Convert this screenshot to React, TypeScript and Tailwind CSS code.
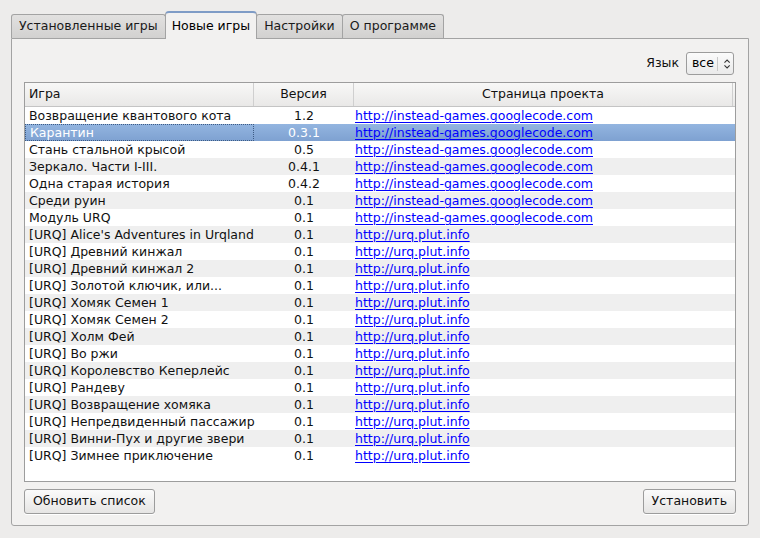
import React from "react";

const G = "http://instead-games.googlecode.com";
const U = "http://urq.plut.info";

const GAMES: [string, string, string][] = [
  ["Возвращение квантового кота", "1.2", G],
  ["Карантин", "0.3.1", G],
  ["Стань стальной крысой", "0.5", G],
  ["Зеркало. Части I-III.", "0.4.1", G],
  ["Одна старая история", "0.4.2", G],
  ["Среди руин", "0.1", G],
  ["Модуль URQ", "0.1", G],
  ["[URQ] Alice's Adventures in Urqland", "0.1", U],
  ["[URQ] Древний кинжал", "0.1", U],
  ["[URQ] Древний кинжал 2", "0.1", U],
  ["[URQ] Золотой ключик, или...", "0.1", U],
  ["[URQ] Хомяк Семен 1", "0.1", U],
  ["[URQ] Хомяк Семен 2", "0.1", U],
  ["[URQ] Холм Фей", "0.1", U],
  ["[URQ] Во ржи", "0.1", U],
  ["[URQ] Королевство Кеперлейс", "0.1", U],
  ["[URQ] Рандеву", "0.1", U],
  ["[URQ] Возвращение хомяка", "0.1", U],
  ["[URQ] Непредвиденный пассажир", "0.1", U],
  ["[URQ] Винни-Пух и другие звери", "0.1", U],
  ["[URQ] Зимнее приключение", "0.1", U],
];

const SELECTED = 1;

function Tab({ label, active }: { label: string; active?: boolean }) {
  if (active) {
    return (
      <div className="relative z-10 -mb-px -ml-px h-[28px] px-[6px] flex items-center rounded-t-[4px] border border-b-0 border-[#a3a3a3] border-t-[#7f9cc6] border-t-2 bg-[#f2f1f0] text-[#000]">
        {label}
      </div>
    );
  }
  return (
    <div className="h-[24px] px-[7px] flex items-center rounded-t-[3px] border border-b-0 border-[#a3a3a3] bg-gradient-to-b from-[#e2e1e0] to-[#d2d1d0] text-[#1a1a1a] -ml-px first:ml-0">
      {label}
    </div>
  );
}

function Button({ children }: { children: React.ReactNode }) {
  return (
    <button className="h-[25px] px-[8px] rounded-[3px] border border-[#9c9c9c] bg-gradient-to-b from-[#fbfbfb] to-[#e6e5e4] text-[#111] shadow-[0_1px_0_#fff]">
      {children}
    </button>
  );
}

export default function App() {
  return (
    <div
      className="w-[760px] h-[538px] bg-[#edeceb] pt-[10px] pl-[11px] pr-[11px] text-[12.5px] leading-none"
      style={{ fontFamily: '"DejaVu Sans", sans-serif' }}
    >
      {/* Вкладки */}
      <div className="flex items-end h-[28px]">
        <Tab label="Установленные игры" />
        <Tab label="Новые игры" active />
        <Tab label="Настройки" />
        <Tab label="О программе" />
      </div>

      {/* Панель */}
      <div className="h-[488px] border border-[#a3a3a3] bg-[#f2f1f0] rounded-b-[3px] px-[12px] flex flex-col">
        <div className="flex items-center justify-end gap-[7px] pt-[13px] pr-[2px]">
          <span className="text-[#111]">Язык</span>
          <div className="h-[23px] w-[48px] rounded-[3px] border border-[#9c9c9c] bg-gradient-to-b from-[#fbfbfb] to-[#eaeaea] flex items-center">
            <span className="pl-[5px] pr-[3px] text-[#000]">все</span>
            <span className="w-px h-[14px] bg-[#c8c8c8]" />
            <svg width="14" height="14" viewBox="0 0 14 14" className="ml-[3px]">
              <path d="M4 5.5 L7 2.5 L10 5.5" fill="none" stroke="#333" strokeWidth="1.2" />
              <path d="M4 8.5 L7 11.5 L10 8.5" fill="none" stroke="#333" strokeWidth="1.2" />
            </svg>
          </div>
        </div>

        {/* Таблица */}
        <div className="mt-[7px] h-[400px] border border-[#9d9d9d] bg-white flex flex-col">
          <div className="h-[24px] shrink-0 flex items-center bg-gradient-to-b from-[#f8f8f7] to-[#e9e8e7] border-b border-[#c4c4c4] text-[#111]">
            <div className="w-[229px] pl-[4px] h-full flex items-center border-r border-[#cfcfcf]">Игра</div>
            <div className="w-[100px] h-full flex items-center justify-center border-r border-[#cfcfcf]">Версия</div>
            <div className="flex-1 h-full flex items-center justify-center border-r border-[#cfcfcf] mr-[2px]">
              Страница проекта
            </div>
          </div>
          {GAMES.map(([name, ver, url], i) => {
            const sel = i === SELECTED;
            const bg = sel
              ? "bg-gradient-to-b from-[#93b5e0] to-[#7ea1d1] text-white"
              : i % 2 === 1
              ? "bg-[#efefef] text-[#111]"
              : "bg-white text-[#111]";
            return (
              <div key={name} className={`h-[17px] shrink-0 flex leading-[17px] ${bg}`}>
                <div
                  className={`w-[229px] h-full pl-[4px] whitespace-nowrap ${
                    sel ? "border border-dotted border-[#3d5b84] leading-[15px] pl-[3px]" : ""
                  }`}
                >
                  {name}
                </div>
                <div className="w-[100px] text-center">{ver}</div>
                <div className="flex-1 pl-[1px]">
                  <a href="#" className="text-[#0000ff] underline underline-offset-[2px]">
                    {url}
                  </a>
                </div>
              </div>
            );
          })}
        </div>

        <div className="mt-[7px] flex justify-between">
          <Button>Обновить список</Button>
          <Button>Установить</Button>
        </div>
      </div>
    </div>
  );
}
